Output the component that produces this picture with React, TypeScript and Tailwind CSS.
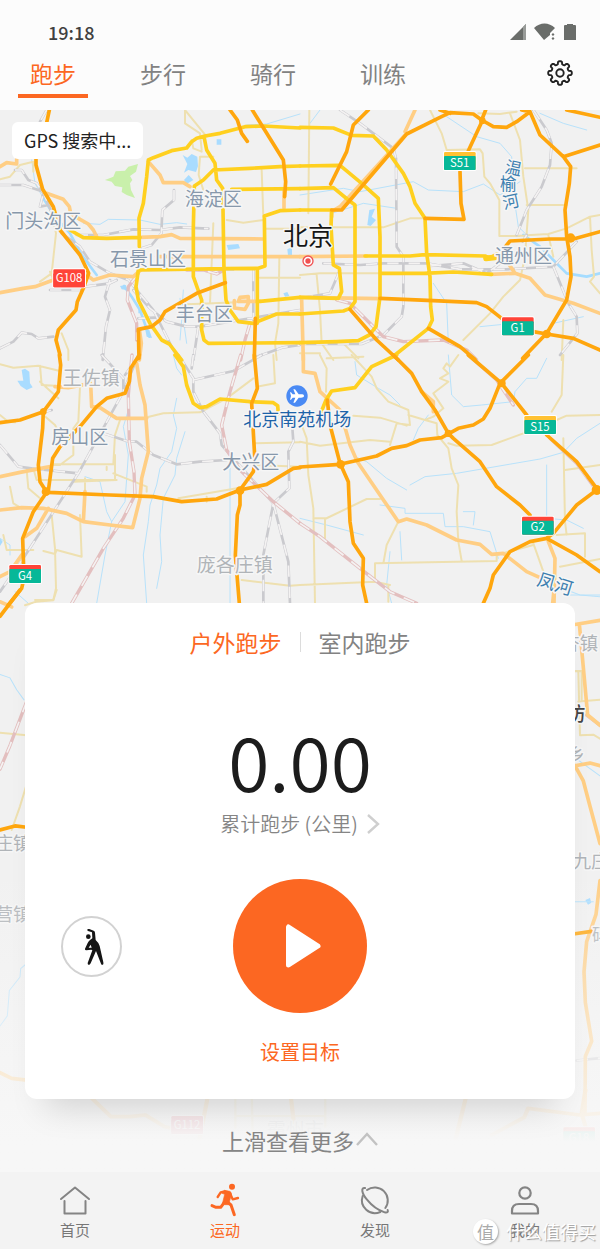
import React, { useState } from "react";

type Road = { kind: keyof typeof roadStyles; d: string };
type Tile = { x: number; y: number; scale?: string; roads: Road[] };

const roadStyles = {
  water: { stroke: "#b8e2fb", width: 3 },
  river: { stroke: "#a5dcff", width: 8 },
  local: { stroke: "#eee0b0", width: 6 },
  rail: { stroke: "#cacace", width: 8 },
  metro: { stroke: "#e3bfbf", width: 10 },
  main: { stroke: "#ffce84", width: 11 },
  ring: { stroke: "#ffd01f", width: 11 },
  highway: { stroke: "#ffa60d", width: 11 },
};

const tiles: Tile[] = [
  {
    x: 0,
    y: 0,
    roads: [
      { kind: "water", d: "M95 150L105 220 130 265M250 340L300 343 325 328 420 330 480 343 530 338 560 342M550 540L546 600 560 700M740 45L800 42 900 12M540 565L545 630 540 690" },
      { kind: "river", d: "M128 262L165 320 210 370 245 435 290 495M372 528L395 560 420 600 448 680" },
      { kind: "local", d: "M555 0V40L600 70 605 120M555 0L620 80M575 90L580 115 605 125M640 140H600L596 195 610 240M640 340L630 580M0 208L30 200 60 165 100 155V185M140 250L168 370 155 490 120 515M150 485L160 510M785 180L790 320M680 330L730 338 790 330M795 356H900M780 503H900M838 446L835 640 825 700 830 750M560 583L640 580 740 575M185 670L205 720V750" },
      { kind: "rail", d: "M0 225L70 225 130 245 145 285 185 370 240 410 270 455 330 490 385 510 460 600 520 720 540 750M45 180H65L85 210 110 220 130 250 120 290 145 285M230 375L270 375 310 375 400 358 480 360 540 352 625 356M522 240V270L487 300 484 370 455 405 425 415M255 530L330 520 350 510M330 510L315 560 330 600 318 650 308 750M0 715L40 695 65 668 95 672 115 685 160 680M400 540L450 595 500 635 560 650 600 650 900 600M595 650L580 750M760 480V630M415 480L700 478M415 625L480 622M770 740L850 712 900 705M140 0L120 35M150 540L240 540" },
      { kind: "metro", d: "M415 490L385 530 382 570 410 640V690M750 640L735 690 722 750M560 480H610L650 492 672 480" },
      { kind: "main", d: "M0 170L20 158 50 162 50 148M0 548L70 535 105 530 160 510M140 250L190 268 208 290 212 310 240 328 265 342 280 360 290 380M445 155L480 195 490 218 550 218 570 230M420 382L480 380 515 374 540 385 790 387M470 440H900M260 495L280 510 330 495 400 500 420 482M780 574H715L720 562 745 560V580L735 598 703 594V572M418 658L424 700 418 750M852 240V295" },
      { kind: "ring", d: "M900 54L790 48 735 50 660 70 615 78 590 85 575 95 560 114 515 122 460 143 445 150 440 200 430 280 417 325 418 410M415 480L408 530 415 570 450 640 485 690 508 702 545 750M612 80L620 120 645 160 650 210 668 235 672 480 678 570 690 600 715 635 760 640 830 612H900M640 180L610 210 583 228 580 350 580 500 605 570 605 660 612 690 625 700 900 698M640 180L750 175 840 170 900 168M695 238L900 236M900 300L840 302 793 318 795 468 775 475 672 476 415 480M210 360L250 383 320 385 420 382M772 480V640M780 574L900 562" },
      { kind: "highway", d: "M148 0L140 38M108 148V165L128 238 160 290 180 360 240 435 266 490 250 535 232 575 228 600 175 660 168 690 180 735M690 0L712 30 725 70 742 94M757 0L850 150 857 215 854 260M676 518L590 550 495 605 480 630 455 650 415 658 417 745M766 625L763 745" },
    ],
  },
  {
    x: 900,
    y: 0,
    roads: [
      { kind: "water", d: "M440 20L530 80 600 100 635 140 640 250 655 350 680 375M0 255L130 235 180 245 340 215 385 240 490 245 550 222 600 255 660 215M720 10L790 40 860 60M95 310L190 280 290 295M400 520L440 580 445 700M540 650L640 640 700 660M760 640L850 620M30 40L60 0" },
      { kind: "river", d: "M670 375L720 410 760 450 800 490 860 500 900 490" },
      { kind: "local", d: "M28 0L25 310M390 0L410 40 425 70 440 120 540 118 548 130 553 200 570 220 598 270V378H660M535 10L600 12 650 5M630 10L660 90 670 200 685 300 680 370 675 440 660 510 610 560 570 610 490 690M675 175H830M680 285H800M0 352H250L330 325 372 325M0 495L60 490 240 490M50 495L60 600 65 700 100 750M0 730H60M640 378L745 372 800 355 870 320 900 315M745 375L760 440M870 320L875 420 882 500 870 515 900 550M790 630L785 750M80 745L190 740M130 700L175 745" },
      { kind: "rail", d: "M120 0L180 40 280 115 288 145 290 410 310 440V590L305 620 250 675 185 702 0 702M70 460L180 465 250 460 380 460 480 478 620 478 760 470 830 395M390 468L490 460 560 490M680 375L668 395M700 0L740 60 755 100 750 165 725 230 680 300 650 375M600 460L560 490M120 480L90 550 0 565M760 470L805 580 830 620 832 670 780 735" },
      { kind: "metro", d: "M110 570L150 580 215 645 250 680 310 695 430 690 500 720 530 750" },
      { kind: "main", d: "M0 440L200 438M345 0L315 65M320 70L120 290 95 305V320M5 570L10 750M0 562L240 566M625 460L645 490 690 505 735 555 820 580 900 610M570 493L645 490" },
      { kind: "ring", d: "M0 52L100 54 155 76 220 78 260 120 310 190 330 230 345 280 375 325 380 430 390 500 392 590 397 630 385 655 285 735M0 168L120 166 185 220 235 265 240 380V560L228 650 208 675 175 692 110 695 0 698M0 236L100 233 145 270 165 285V575L150 595 130 603 0 612M0 300H95L93 350 100 465 118 475 125 545 115 565 0 562M195 438L330 438 375 434 555 438 570 445M575 442L590 432M245 490L370 490 460 486 575 493" },
      { kind: "highway", d: "M205 0L160 45 140 125 92 222M95 300H125L320 72 420 22 450 8 520 12 545 30 580 50 620 52 650 35 690 5 720 75 790 140 812 170 808 220 795 300 800 380 810 440 813 500 800 570 740 670 668 745M545 30L557 0M420 0L450 10M548 30L505 122M480 185L483 280 492 328 375 325M690 5L665 0M800 0L900 22M790 140L900 105M600 430L630 393 750 387 820 387 900 365M240 565L400 572 530 578 560 590 605 625M700 665L740 672 820 685 900 720M150 598L230 690 295 750M385 655L480 710 525 748" },
    ],
  },
  {
    x: 0,
    y: 735,
    roads: [
      { kind: "water", d: "M385 165L370 215 385 300 375 440 335 500 315 600 290 745M255 365L300 380 320 470 335 500M530 130L520 180 530 220 515 290 480 340 470 390 450 450 445 500 430 600 440 745M555 230L530 310 525 360 490 430 480 540 485 620 470 700M690 340V745M520 0L530 40 545 60M0 550L30 570V600M45 710L85 745" },
      { kind: "local", d: "M0 28L40 38 115 32 180 48M120 32L125 90 165 92M275 75L240 95 235 200 220 220V300L180 330H155M160 328L340 328 345 240 360 195M345 300V375L110 375 100 340M220 380L350 375M340 355L440 395V410M0 180L25 200 45 202M130 180L165 210 180 240M435 188L490 175 600 172 680 130 760 70M765 265L900 262M770 330L900 335M535 430L720 398M620 425V440M155 480L165 580 168 700 160 735H105M130 588L165 597 170 585 245 605 240 480M10 540L20 585H100M30 395L40 445 65 460M80 345L85 400 120 430M255 370V410M120 80L175 130M725 675L870 692 900 690M820 0L825 85 770 95M320 335V345" },
      { kind: "rail", d: "M415 0L370 110 235 355 70 610 0 710M305 0L370 70 370 110M400 25L375 60M310 235L380 258 410 260 460 300 530 328 600 320 680 315M0 270L55 335 110 342 235 355M120 175L155 165M535 0L580 70 580 110 610 170 660 235 665 270 700 310 820 445M580 75L700 48 785 0M875 190L880 260 865 290 868 400 820 445 790 600V745M820 445L865 620 870 745M580 0L575 40" },
      { kind: "metro", d: "M396 0L385 120 388 260 402 350 405 420 370 490 310 580 215 745M722 0L690 110 665 210 680 285 720 345 820 440 900 505" },
      { kind: "main", d: "M410 25L420 90 435 150 445 290 425 370 420 430 398 518 330 510 250 500 200 475 130 460 65 458 0 465M0 365L60 352 150 335M255 410L250 500M165 95L205 98 272 85 275 155 300 158 350 190 440 190M145 460L110 520 75 545M65 600L30 650 0 665" },
      { kind: "ring", d: "M525 0L550 35 560 90 580 145 600 158 620 155 660 132 750 140 820 143 833 152 835 175" },
      { kind: "highway", d: "M178 0L182 30 175 110 130 170 60 195 0 203M130 165L128 220 115 330 120 380 138 408M418 0L392 40 388 80 375 115 320 130 290 155 240 215 180 275 158 310 145 408M145 412L330 420 460 425 545 440 650 432 720 405 800 388 880 340 900 338M140 412L100 470 68 550 72 670 65 700 25 750M763 0L772 100 755 145 765 320 760 350 720 405 720 450 712 480 706 600 718 745" },
    ],
  },
  {
    x: 900,
    y: 735,
    roads: [
      { kind: "water", d: "M165 20L170 60 235 100 270 120 300 150M445 0L455 120 490 155 545 150 640 140 645 110 680 70 710 70 740 10M340 255L355 220 385 180M330 390L375 365 470 355 720 312 790 292 830 250 900 205M165 305L200 320 260 370 320 405M240 450L315 460V475L430 475 435 515 490 515 570 530 595 610M740 330V500M0 490L80 510 190 540M300 530L305 615M270 590L260 690 275 745M740 490L800 495 850 520M490 470L525 470 520 510M800 720L900 720" },
      { kind: "local", d: "M60 0L80 40 78 110M155 0L215 65 230 100 265 140 325 165 330 210 290 205 270 270M160 182L240 188 320 212M325 180L375 195 400 185 430 160 400 115 445 80 420 70 445 55 430 40 440 25 450 35 475 0M0 260L60 272 210 255 270 260M5 210L20 250 25 360 40 460 45 745M75 490V550M80 490L40 490M240 432H200L75 492M375 195L410 205 412 240 445 280 455 340 475 390 470 470 475 560 485 618M445 265L470 272 575 270 670 235M295 500L260 570 250 625M0 690L225 680 225 625 590 618V600L700 570M265 690V740M225 680L270 690M790 0L785 120 755 170M790 250L795 500 800 540M900 180L800 182 770 195M795 345L900 330M770 540L855 535V605M780 635L900 612M700 565L730 650 720 680" },
      { kind: "metro", d: "M0 505L60 545 180 640 270 710 350 745M505 0L590 75 640 150M750 250L830 325 885 400" },
      { kind: "main", d: "M10 0V50L45 55 60 110 120 165 150 270 172 320 240 420 295 500 320 492 380 510 470 555 540 568 575 598 610 595 680 650 720 668M365 110L400 140V170M745 560L765 610 762 745" },
      { kind: "ring", d: "M290 0L215 35 165 98 95 108 78 135 60 180" },
      { kind: "highway", d: "M280 0L335 55 365 110 405 165 445 235 460 250 540 320 590 395 660 450 690 480M82 135L90 210 120 325 145 380 150 500 160 565 190 610 188 690 200 745M0 336L120 328 230 303 275 280 320 272 360 255 425 248 475 220 520 210 550 192 570 160 600 85 685 0M505 0L605 85 680 180M740 240L830 320 890 400M890 405L830 450 760 535 740 550 690 560 630 590 580 660 570 700 550 745M740 550L830 600 900 650" },
    ],
  },
  {
    x: 1620,
    y: 1440,
    scale: "1 1.014",
    roads: [
      { kind: "water", d: "M80 0L120 15 180 20M110 500L180 550M105 922H160" },
      { kind: "local", d: "M105 240H125V325M115 240L120 430 160 428 180 440M115 330L180 325" },
      { kind: "metro", d: "M140 370L180 400" },
      { kind: "rail", d: "M110 1392L180 1385" },
      { kind: "main", d: "M42 0L38 40M105 102L180 90M118 100L143 370 180 400M105 520L150 512 180 520M105 520L130 565 150 640 180 750M180 860L168 960 140 1040 132 1130 136 1220 155 1335 136 1380 135 1550" },
      { kind: "highway", d: "M105 1017L155 1010" },
    ],
  },
  {
    x: 0,
    y: 1440,
    scale: "1 1.014",
    roads: [
      { kind: "water", d: "M0 250L30 260 50 295 72 325M80 1105L62 1120 60 1145 28 1185 22 1260 0 1290" },
      { kind: "local", d: "M75 45L108 35 160 30 170 0M0 422L80 430M80 575L60 640 35 710" },
      { kind: "metro", d: "M80 330L30 460 0 530" },
      { kind: "main", d: "M0 35L35 50M0 1428L35 1445 80 1450" },
      { kind: "highway", d: "M60 0L0 78M0 710L45 698 80 702" },
    ],
  },
  {
    x: 0,
    y: 2940,
    scale: "1.148 1",
    roads: [
      { kind: "local", d: "M615 20V115M658 20L660 130M850 20V110M615 78H850" },
      { kind: "main", d: "M240 25L290 80 340 80 380 75 430 110 450 115M543 20L520 155M760 20L770 120M1218 20L1190 150M1285 135L1370 82 1380 55 1515 75 1568 70M1530 0L1520 70 1530 110" },
    ],
  },
];

const drawOrder = Object.keys(roadStyles) as (keyof typeof roadStyles)[];

type Place = { text: string; x: number; y: number; size: number; fill: string; rotate?: number; weight?: number };

const places: Place[] = [
  { text: "门头沟区", x: 16, y: 354, size: 57, fill: "#8798ab" },
  { text: "海淀区", x: 554, y: 289, size: 57, fill: "#8798ab" },
  { text: "石景山区", x: 330, y: 469, size: 57, fill: "#8798ab" },
  { text: "丰台区", x: 527, y: 632, size: 57, fill: "#8798ab" },
  { text: "通州区", x: 1485, y: 458, size: 57, fill: "#8798ab" },
  { text: "王佐镇", x: 188, y: 824, size: 57, fill: "#b0b4b8" },
  { text: "房山区", x: 154, y: 1002, size: 57, fill: "#8798ab" },
  { text: "大兴区", x: 667, y: 1076, size: 57, fill: "#8798ab" },
  { text: "庞各庄镇", x: 590, y: 1385, size: 57, fill: "#b0b4b8" },
  { text: "北京", x: 849, y: 404, size: 75, fill: "#151515" },
  { text: "北京南苑机场", x: 730, y: 948, size: 54, fill: "#1d63a8" },
  { text: "温", x: 1512, y: 187, size: 50, fill: "#3d80b0", rotate: 12 },
  { text: "榆", x: 1500, y: 240, size: 50, fill: "#3d80b0" },
  { text: "河", x: 1512, y: 298, size: 50, fill: "#3d80b0", rotate: -12 },
  { text: "凤河", x: 1608, y: 1425, size: 54, fill: "#3d80b0", rotate: 17 },
  { text: "杏镇", x: 1684, y: 1620, size: 55, fill: "#b0b4b8" },
  { text: "廊坊", x: 1642, y: 1832, size: 57, fill: "#454545", weight: 500 },
  { text: "乡", x: 1700, y: 1953, size: 55, fill: "#b0b4b8" },
  { text: "九庄", x: 1718, y: 2274, size: 55, fill: "#b0b4b8" },
  { text: "码", x: 1776, y: 2493, size: 52, fill: "#b0b4b8" },
  { text: "庄镇", x: -16, y: 2219, size: 55, fill: "#b0b4b8" },
  { text: "营镇", x: -16, y: 2434, size: 55, fill: "#b0b4b8" },
  { text: "霸州市", x: 800, y: 3082, size: 57, fill: "#b0b4b8" },
];

type Shield = { text: string; x: number; y: number; top: string; body: string };

const shields: Shield[] = [
  { text: "G108", x: 160, y: 478, top: "#ff4438", body: "#ff4438" },
  { text: "S51", x: 1332, y: 126, top: "#ffc233", body: "#06b898" },
  { text: "G1", x: 1506, y: 622, top: "#ff4438", body: "#06b898" },
  { text: "G4", x: 28, y: 1365, top: "#ff4438", body: "#06b898" },
  { text: "S15", x: 1573, y: 918, top: "#ffc233", body: "#06b898" },
  { text: "G2", x: 1566, y: 1220, top: "#ff4438", body: "#06b898" },
  { text: "G112", x: 514, y: 3018, top: "#e4506a", body: "#e4506a" },
  { text: "G18", x: 1690, y: 3052, top: "#ff4438", body: "#06b898" },
];

function CityMap() {
  return (
    <svg
      viewBox="0 0 1800 3186"
      preserveAspectRatio="xMidYMin slice"
      className="absolute inset-0 size-full"
      role="img"
      aria-label="北京"
    >
      <rect width="1800" height="3186" fill="#f1f1f1" />
      <path fill="#c9f0ab" d="M315 210L340 200 347 184 375 182 385 170 414 162 408 185 390 198 397 210 390 220 393 240 405 264 380 255 365 246 367 232 345 228 335 215z" />
      <g fill="#a9dcff">
        <path d="M548 135L562 143 575 132 592 140 594 168 588 186 565 180 552 188 562 162zM552 210L566 195 580 210 560 222zM650 88H664V104H650zM680 405L715 402 720 415 685 420zM862 418L876 412V436H864zM415 595H428V610H415zM435 655L448 660 456 684 440 680zM360 528L378 525 380 540 365 538zM1108 300L1125 296 1115 320 1128 330 1112 348 1102 345zM850 550L862 546 868 558 855 560z" />
        <path d="M65 780L75 776 88 785 90 820 98 832 80 840 62 828 52 812 70 812zM0 1285L8 1295 0 1308z" />
        <path d="M1756 2370L1770 2364 1774 2378 1764 2384z" />
      </g>
      <g fill="none" strokeLinecap="round" strokeLinejoin="round">
        {drawOrder.map((kind) =>
          tiles.map((tile, i) =>
            tile.roads
              .filter((road) => road.kind === kind)
              .map((road) => (
                <g key={kind + i} transform={`translate(${tile.x} ${tile.y}) scale(${tile.scale ?? "1"})`}>
                  <path d={road.d} stroke={roadStyles[kind].stroke} strokeWidth={roadStyles[kind].width} />
                  {(kind === "rail" || kind === "metro") && (
                    <path d={road.d} stroke="#f4f2f2" strokeWidth={5} strokeDasharray="34 30" strokeLinecap="butt" />
                  )}
                </g>
              )),
          ),
        )}
      </g>
      <g fill="#ffa60d">
        <circle cx="138" cy="1145" r="13" />
        <circle cx="720" cy="1142" r="13" />
        <circle cx="1022" cy="1063" r="13" />
        <circle cx="1345" cy="970" r="11" />
        <circle cx="1505" cy="820" r="12" />
        <circle cx="1790" cy="1140" r="15" />
        <circle cx="1640" cy="672" r="13" />
        <circle cx="1712" cy="384" r="14" />
        <circle cx="1447" cy="32" r="10" />
        <circle cx="130" cy="905" r="10" />
      </g>
      <path d="M1458 445L1485 442" stroke="#ffd01f" strokeWidth="17" strokeLinecap="round" />
      <circle cx="924" cy="453" r="15" fill="#fff" stroke="#f05252" strokeWidth="4" />
      <circle cx="924" cy="453" r="8" fill="#f05252" />
      <circle cx="891" cy="858" r="32" fill="#4a8af4" />
      <path
        transform="translate(891 858)"
        d="M21 0C21-4 17-5 12-5H5L-6-20H-11L-5-5H-13L-18-11H-21L-18 0-21 11H-18L-13 5H-5L-11 20H-6L5 5H12C17 5 21 4 21 0z"
        fill="#fff"
      />
      <g className="font-['Noto_Sans_CJK_SC',sans-serif]">
        {places.map((p) => (
          <text
            key={p.text}
            transform={`translate(${p.x} ${p.y}) rotate(${p.rotate ?? 0})`}
            fontSize={p.size}
            fontWeight={p.weight ?? 400}
            fill={p.fill}
            stroke="#f6f6f6"
            strokeWidth="9"
            strokeLinejoin="round"
            paintOrder="stroke"
          >
            {p.text}
          </text>
        ))}
        {shields.map((s) => (
          <g key={s.text} transform={`translate(${s.x} ${s.y})`}>
            <rect x="-3" y="-3" width="101" height="60" rx="6" fill="#fff" />
            <rect width="95" height="54" rx="4" fill={s.top} />
            <rect y="12" width="95" height="42" rx="3" fill={s.body} />
            <text x="47" y={s.body === s.top ? 38 : 44} fontSize="34" fill="#fff" textAnchor="middle">
              {s.text}
            </text>
          </g>
        ))}
      </g>
    </svg>
  );
}

function gearPath() {
  const points: string[] = [];
  for (let i = 0; i < 8; i++) {
    [
      [-22.5, 8.6],
      [-14, 9],
      [-10, 11.2],
      [-5, 11.8],
      [5, 11.8],
      [10, 11.2],
      [14, 9],
    ].forEach(([offset, radius]) => {
      const a = ((i * 45 + offset - 90) * Math.PI) / 180;
      points.push(`${(14 + radius * Math.cos(a)).toFixed(2)} ${(14 + radius * Math.sin(a)).toFixed(2)}`);
    });
  }
  return `M${points.join("L")}Z`;
}

function StatusBar() {
  return (
    <div className="flex h-[50px] items-end justify-between pr-6 pl-12">
      <time className="text-lg/9 font-medium text-[#404040]">19:18</time>
      <svg width="68" height="38" viewBox="0 0 68 38" fill="#6a6d6a" aria-hidden="true">
        <path d="M2 28L18 12V28z" />
        <path d="M15 15L18 12V28H15z" fill="#989b98" />
        <path d="M26 16C32 10 41 10 47 16L42 21V23L36 28z" />
        <path d="M43.500 22.500L45 21 46.500 22.500 45 24zM43.500 26.500L45 25 46.500 26.500 45 28z" />
        <path d="M56 14Q56 13 57 13H59V12H65V13H67Q68 13 68 14V28H56z" />
      </svg>
    </div>
  );
}

const sports = ["跑步", "步行", "骑行", "训练"];

function SportTabs() {
  const [active, setActive] = useState("跑步");
  return (
    <div className="flex items-start justify-between pr-[26px] pl-[18px]">
      <nav className="flex gap-10">
        {sports.map((name) => (
          <button
            key={name}
            type="button"
            onClick={() => setActive(name)}
            className={
              active === name
                ? "h-12 w-[70px] border-b-4 border-[#fc6722] pt-px text-[23px]/[44px] text-[#fc6722]"
                : "h-12 w-[70px] border-b-4 border-transparent pt-px text-[23px]/[44px] text-[#828282]"
            }
          >
            {name}
          </button>
        ))}
      </nav>
      <button type="button" aria-label="设置" className="mt-[9px]">
        <svg width="28" height="28" viewBox="0 0 28 28" fill="none" stroke="#222" strokeWidth="1.900" strokeLinejoin="round">
          <path d={gearPath()} />
          <circle cx="14" cy="14" r="3.700" />
        </svg>
      </button>
    </div>
  );
}

function WorkoutCard() {
  const [mode, setMode] = useState("户外跑步");
  return (
    <section className="rounded-xl bg-white pt-[18px] pb-8 shadow-[0_28px_32px_-20px_rgba(0,0,0,0.15)]">
      <div className="flex items-center justify-center gap-[18px] text-[23px]/[42px]">
        <button type="button" onClick={() => setMode("户外跑步")} className={mode === "户外跑步" ? "text-[#fc6722]" : "text-[#828282]"}>
          户外跑步
        </button>
        <span className="h-5 w-px bg-[#dcdcdc]" />
        <button type="button" onClick={() => setMode("室内跑步")} className={mode === "室内跑步" ? "text-[#fc6722]" : "text-[#828282]"}>
          室内跑步
        </button>
      </div>
      <p className="mt-13 mb-1.5 text-center text-[75px]/[90px] font-[350] text-[#1c1c1c]">0.00</p>
      <a href="#history" className="flex items-center justify-center gap-2 text-[20px]/[26px] font-[350] text-[#858585]">
        累计跑步 (公里)
        <svg width="14" height="22" viewBox="0 0 14 22" fill="none" stroke="#cfcfcf" strokeWidth="2.400" aria-hidden="true">
          <path d="M2 2L12 11 2 20" />
        </svg>
      </a>
      <div className="mt-[42px] grid grid-cols-[1fr_auto_1fr] items-center">
        <button type="button" aria-label="热身" className="ml-9 flex size-[61px] items-center justify-center rounded-full border-2 border-[#d2d2d2]">
          <svg width="61" height="61" viewBox="64 168 183 183" fill="#151515" className="shrink-0" aria-hidden="true">
            <circle cx="146" cy="230" r="7" />
            <path d="M144 207Q141 211 145 213L157 217 158 235 151 240Q146 244 144 249L136 266Q135 271 140 271L155 269 158 271 144 309Q143 314 148 315 151 314 153 310L169 273 184 311Q186 316 190 314 192 312 191 307L180 258Q178 249 168 240L166 218Q166 214 162 212L149 207zM153 254L156 263H147z" fillRule="evenodd" />
          </svg>
        </button>
        <button type="button" aria-label="开始" className="flex size-[134px] items-center justify-center rounded-full bg-[#fc6722]">
          <svg width="134" height="134" viewBox="0 0 134 134" aria-hidden="true">
            <path d="M55.500 48V86L85 67z" fill="#fff" stroke="#fff" strokeWidth="5" strokeLinejoin="round" />
          </svg>
        </button>
      </div>
      <button type="button" className="mx-auto mt-6 block text-[20px]/[30px] text-[#fc6722]">
        设置目标
      </button>
    </section>
  );
}

function BottomNav() {
  return (
    <nav className="relative grid grid-cols-4 bg-[#f3f3f3] pt-2.5 pb-[9px] text-[15px]/[20px] text-[#777]">
      <a href="#home" className="flex flex-col items-center gap-0.5">
        <svg width="36" height="36" viewBox="0 0 36 36" fill="none" stroke="#848484" strokeWidth="2" strokeLinecap="round" strokeLinejoin="round" aria-hidden="true">
          <path d="M4 17L18 5.500 32 17M7.500 19V31.500H28.500V19" />
        </svg>
        首页
      </a>
      <a href="#sport" className="flex flex-col items-center gap-0.5 text-[#fc6722]" aria-current="page">
        <svg width="36" height="36" viewBox="51 30 108 108" fill="none" stroke="#fc6722" strokeLinecap="round" strokeLinejoin="round" aria-hidden="true">
          <circle cx="126" cy="44" r="9" fill="#fc6722" stroke="none" />
          <path d="M104 55L119 58Q126 61 124 69L118 90 122 98H104L98 92 104 67 96 64z" fill="#fc6722" strokeWidth="2" />
          <path d="M104 58L92 61 83 75M122 68L128 82 144 78" strokeWidth="7" />
          <path d="M110 88L123 99 133 128M104 90L92 106H78L66 101" strokeWidth="9" />
        </svg>
        运动
      </a>
      <a href="#discover" className="flex flex-col items-center gap-0.5">
        <svg width="36" height="36" viewBox="501 30 108 108" fill="none" stroke="#848484" strokeWidth="6" strokeLinecap="round" aria-hidden="true">
          <path d="M531 54A39 39 0 0 1 586 108" />
          <path d="M525 48C512 46 515 64 531 83C547 103 568 116 584 121C593 123 595 119 593 114" />
          <path d="M518 72A39 39 0 0 0 571 120" />
        </svg>
        发现
      </a>
      <a href="#me" className="flex flex-col items-center gap-0.5">
        <svg width="36" height="36" viewBox="0 0 36 36" fill="none" stroke="#848484" strokeWidth="2.200" strokeLinejoin="round" aria-hidden="true">
          <circle cx="18" cy="11" r="5.700" />
          <path d="M5 31.500V29Q5 22 12 22H24Q31 22 31 29V31.500z" />
        </svg>
        我的
      </a>
      <div className="pointer-events-none absolute right-1 bottom-1 flex items-center gap-2 text-[18px]/[28px] text-white [text-shadow:1px_1px_1px_#999]">
        <span className="flex size-[25px] items-center justify-center rounded-full bg-white text-[17px]/[25px] text-[#aaa] shadow-[1px_1px_2px_#aaa] [text-shadow:none]">
          值
        </span>
        什么值得买
      </div>
    </nav>
  );
}

export default function App() {
  return (
    <div className="flex min-h-screen flex-col bg-[#fcfcfc] font-['Noto_Sans_CJK_SC',sans-serif] font-normal">
      <header className="h-[110px]">
        <StatusBar />
        <SportTabs />
      </header>
      <main className="relative flex grow flex-col justify-between overflow-hidden">
        <CityMap />
        <div className="absolute inset-x-0 bottom-0 h-[300px] bg-linear-to-b from-[#f7f7f7]/0 via-[#f7f7f7]/75 via-70% to-[#f7f7f7] to-90%" />
        <p className="relative mt-3 ml-3 self-start rounded-md bg-white px-3 text-[18px]/[37px] text-[#222]">GPS 搜索中...</p>
        <div className="relative px-[25px]">
          <WorkoutCard />
          <button type="button" className="mx-auto flex h-[73px] items-center gap-0.5 pt-2.5 text-[22px] text-[#858585]">
            上滑查看更多
            <svg width="22" height="14" viewBox="0 0 22 14" fill="none" stroke="#c2c2c2" strokeWidth="2.400" className="mb-1" aria-hidden="true">
              <path d="M1 13L11 2 21 13" />
            </svg>
          </button>
        </div>
      </main>
      <BottomNav />
    </div>
  );
}
